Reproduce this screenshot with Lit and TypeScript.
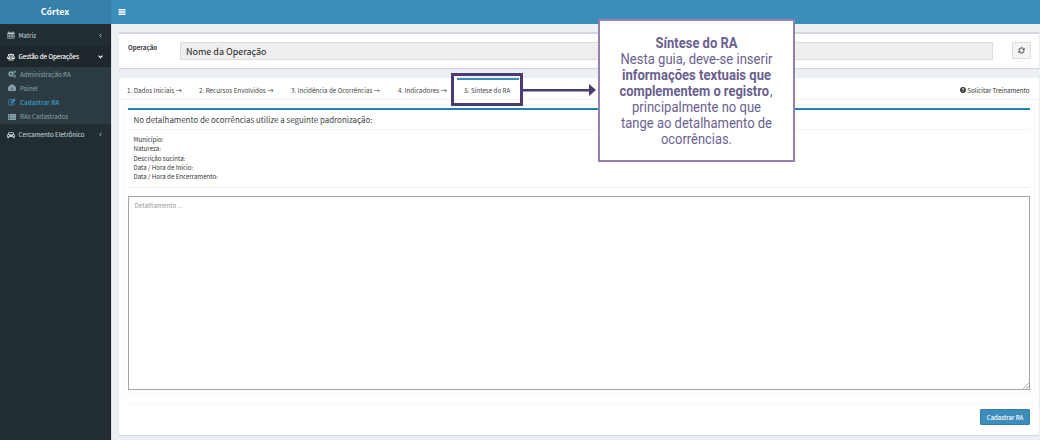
import { LitElement, html, svg, css } from 'lit';
import { customElement } from 'lit/decorators.js';

const glyph = (name: string) => {
  const shapes: Record<string, unknown> = {
    calendar: svg`<path fill-rule="evenodd" d="M1 3h2V1h2v2h6V1h2v2h2v12H1zM2.3 6.3v2h2.4v-2zm3.4 0v2h2v-2zm3 0v2h2v-2zm3 0v2h2v-2zM2.3 9.2v2h2.4v-2zm3.4 0v2h2v-2zm3 0v2h2v-2zm3 0v2h2v-2zM2.3 12v2h2.4v-2zm3.4 0v2h2v-2zm3 0v2h2v-2zm3 0v2h2v-2z"/>`,
    scale: svg`<path fill="none" stroke="currentColor" stroke-width="1.5" d="M8 1v13M3 14h10M2 3h12M3.5 3.5L.8 10h5.4zM12.500 3.500L9.800 10h5.400z"/><path d="M.3 10h6.200q-.5 2.500-3.100 2.500T.3 10zM9.500 10h6.200q-.5 2.500-3.100 2.500T9.500 10z"/>`,
    cogs: svg`<circle cx="6" cy="8" r="3.400" fill="none" stroke="currentColor" stroke-width="2.800"/><circle cx="6" cy="8" r="5.300" fill="none" stroke="currentColor" stroke-width="1.600" stroke-dasharray="2.080 2.080"/><circle cx="13.200" cy="3.600" r="1.800" fill="none" stroke="currentColor" stroke-width="1.900"/><circle cx="13.200" cy="12.400" r="1.800" fill="none" stroke="currentColor" stroke-width="1.900"/>`,
    gauge: svg`<path fill-rule="evenodd" d="M1.400 14A8 8 0 1 1 14.600 14zM2.200 8.900v1.200h1.200V8.900zM4.200 4.900v1.200h1.200V4.900zM12.600 8.900v1.200h1.200V8.900zM9.500 5.500L8 9.600a1.500 1.500 0 1 0 1 .4L10.600 6z"/>`,
    edit: svg`<path fill="none" stroke="currentColor" stroke-width="1.700" d="M10 3H3Q1.500 3 1.500 4.500v8Q1.500 14 3 14h8q1.500 0 1.500-1.500V9.500"/><path d="M5.500 11V8L12.500 1l3 3-7 7z"/>`,
    list: svg`<path d="M0 2h3v2.600H0zM3.800 2H16v2.600H3.800zM0 5.200h3v2.600H0zM3.800 5.200H16v2.600H3.800zM0 8.400h3V11H0zM3.800 8.400H16V11H3.800zM0 11.600h3v2.600H0zM3.800 11.600H16v2.600H3.800z"/>`,
    car: svg`<path fill-rule="evenodd" d="M3 2.500h10l1.700 4.300Q16 7.300 16 8.500V12h-1v2.500h-3V12H4v2.500H1V12H0V8.500Q0 7.300 1.300 6.800zM4.300 4.200L3.400 6.700h9.200l-.9-2.500zM2.800 8.200a1.200 1.200 0 1 0 .1 0zM13 8.200a1.200 1.200 0 1 0 .1 0z"/>`,
    left: svg`<path fill="none" stroke="currentColor" stroke-width="2" d="M10 4L6 8l4 4"/>`,
    down: svg`<path fill="none" stroke="currentColor" stroke-width="2.600" d="M3.500 6L8 10.500 12.500 6"/>`,
    bars: svg`<path d="M1 2h14v3H1zM1 6.600h14v3H1zM1 11.200h14v3H1z"/>`,
    refresh: svg`<path fill="none" stroke="currentColor" stroke-width="2.200" d="M2 7a6 6 0 0 1 11-2.200M14 9a6 6 0 0 1-11 2.200"/><path d="M15 1.500v6H9.500zM1 14.500v-6h5.500z"/>`,
    help: svg`<circle cx="8" cy="8" r="7.800"/><path fill="none" stroke="#fff" stroke-width="2.200" d="M5.400 6.300Q5.600 4 8 4t2.500 2q0 1.300-1.400 2T8 9.800M8 11v2"/>`,
  };
  return html`<svg class="icon ${name}" viewBox="0 0 16 16" fill="currentColor">${shapes[name]}</svg>`;
};

@customElement('side-menu')
class SideMenu extends LitElement {
  static styles = css`
    :host { display: block; background: #222d32; color: #b8c7ce; box-shadow: inset -1px 0 #1c262b; }
    .brand { height: 24px; line-height: 24px; background: #367fa9; color: #fff; font-size: 8.8px; font-weight: 700; text-align: center; padding-right: 1px; }
    .row { display: flex; align-items: center; height: 21px; padding: 0 7px; font-size: 6.2px; line-height: 9px; white-space: nowrap; }
    .row.first { height: 22px; }
    .row span { flex: 1; padding-left: 3.500px; -webkit-text-stroke: .1px currentColor; }
    .row.open { background: #1e282c; color: #fff; }
    .row .icon { width: 8px; height: 8px; }
    .row .left, .row .down { width: 7px; height: 7px; }
    .sub { background: #2c3b41; color: #8aa4af; height: 57px; }
    .leaf { display: flex; align-items: center; height: 14.2px; padding-left: 8px; font-size: 6.2px; line-height: 9px; white-space: nowrap; }
    .leaf span { padding-left: 4px; }
    .leaf .icon { width: 8px; height: 8px; }
    .leaf.on { color: #3c8dbc; font-weight: 700; }
  `;
  render() {
    return html`
      <div class="brand">Córtex</div>
      <div class="row first">${glyph('calendar')}<span>Matriz</span>${glyph('left')}</div>
      <div class="row open">${glyph('scale')}<span>Gestão de Operações</span>${glyph('down')}</div>
      <div class="sub">
        <div class="leaf">${glyph('cogs')}<span>Administração RA</span></div>
        <div class="leaf">${glyph('gauge')}<span>Painel</span></div>
        <div class="leaf on">${glyph('edit')}<span>Cadastrar RA</span></div>
        <div class="leaf">${glyph('list')}<span>RAs Cadastrados</span></div>
      </div>
      <div class="row">${glyph('car')}<span>Cercamento Eletrônico</span>${glyph('left')}</div>`;
  }
}

@customElement('help-callout')
class HelpCallout extends LitElement {
  static styles = css`
    :host { display: block; box-sizing: border-box; width: 197px; height: 143px; border: 2px solid #9382b0; background: #fff; color: #6a5f8f; font-family: Roboto, sans-serif; }
    svg { display: block; width: 193px; height: 139px; fill: currentColor; font-size: 15.3px; }
    .strong { font-weight: 700; }
  `;
  render() {
    const line = (y: number, width: number, text: string, strong = false) => svg`
      <text class=${strong ? 'strong' : ''} x="0" y=${y} transform="translate(96.500 0) scale(.84 1)" textLength=${width / 0.84} lengthAdjust="spacingAndGlyphs">${text}</text>`;
    return html`<svg viewBox="0 0 193 139" text-anchor="middle">
      ${line(27, 82, 'Síntese do RA', true)}
      ${line(43, 152, 'Nesta guia, deve-se inserir')}
      ${line(59, 149, 'informações textuais que', true)}
      <text class="strong" y="75" text-anchor="start" transform="translate(19.500 0) scale(.84 1)" textLength="178" lengthAdjust="spacingAndGlyphs">complementem o registro</text>
      <text y="75" text-anchor="start" transform="translate(170 0) scale(.84 1)">,</text>
      ${line(91, 129, 'principalmente no que')}
      ${line(107, 151, 'tange ao detalhamento de')}
      ${line(123, 71, 'ocorrências.')}
    </svg>`;
  }
}

@customElement('app-root')
class AppRoot extends LitElement {
  static styles = css`
    :host { display: grid; grid-template-columns: 111px 1fr; position: relative; width: 1040px; height: 440px; overflow: hidden; background: #ecf0f5; color: #444; font-family: "Noto Sans CJK SC", sans-serif; font-size: 6.3px; line-height: 9px; }
    * { box-sizing: border-box; }
    .main { display: flex; flex-direction: column; min-width: 0; border-left: 1px solid #d9dfe4; }
    .top { height: 24px; margin-left: -1px; background: #3c8dbc; color: #fff; display: flex; align-items: center; padding-left: 7px; }
    .top .icon { width: 8px; height: 8px; }
    .op { margin: 8px 1px 0 7px; height: 36px; border-top: 2px solid #d2d6de; background: #fff; display: flex; padding: 8px 8px 0 9px; box-shadow: 0 1px 1px rgba(0,0,0,.1); }
    .op label { width: 52px; font-size: 6.2px; font-weight: 700; padding-top: 1px; color: #333; }
    .field { width: 813px; height: 18px; border: 1px solid #dcdcdc; background: #eee; color: #222; font-size: 9px; line-height: 18px; padding-left: 5px; }
    .reload { margin-left: auto; width: 19px; height: 17px; border: 1px solid #ddd; border-radius: 1px; background: #f4f4f4; color: #333; display: flex; align-items: center; justify-content: center; }
    .reload .icon { width: 7px; height: 7px; }
    .card { margin: 10px 1px 0 7px; height: 357px; background: #fff; box-shadow: 0 1px 1px rgba(0,0,0,.1); display: flex; flex-direction: column; }
    .tabs { display: flex; height: 22px; padding: 0 9.500px 0 8px; border-bottom: 1px solid #f4f4f4; line-height: 25px; white-space: nowrap; }
    .tabs .t1 { width: 72px; } .tabs .t2 { width: 92px; } .tabs .t3 { width: 107px; font-size: 6.22px; } .tabs .t4 { width: 58.500px; }
    .tabs .t5 { width: 62px; border-top: 2px solid #3c8dbc; padding-left: 8px; font-size: 6.2px; line-height: 21px; }
    .train { margin-left: auto; display: flex; align-items: center; gap: 1.500px; padding-top: 3px; color: #333; font-size: 6.2px; }
    .train .icon { width: 6px; height: 6px; }
    .pane { margin: 4px 4px 0 5px; height: 290px; border: 1px solid #f7f7f7; padding: 3px 4px 0 3px; }
    .hint { border-top: 2px solid #1f7fb9; border-bottom: 1px solid #eee; height: 80px; }
    .hint h3 { margin: 0; height: 20px; padding-left: 5.500px; border-bottom: 1px solid #f4f4f4; font-size: 7.95px; font-weight: 400; line-height: 19px; }
    .hint div { padding: 5px 0 0 5.500px; font-size: 6.15px; line-height: 9.350px; color: #333; }
    .area { margin-top: 8px; height: 194px; border: 1px solid #a4a4a4; color: #999; padding: 4px 5.500px; position: relative; }
    .grip { position: absolute; right: 0; bottom: 0; width: 6px; height: 6px; }
    .foot { margin: 9px 4px 0 5px; border-top: 1px solid #f7f7f7; padding: 5px 5px; display: flex; justify-content: flex-end; }
    .save { width: 50px; height: 16px; border: 1px solid #367fa9; border-radius: 1px; background: #3c8dbc; color: #fff; text-align: center; font-size: 6.1px; line-height: 15px; -webkit-text-stroke: .1px currentColor; }
    .frame { position: absolute; left: 451px; top: 73px; width: 72px; height: 33px; border: 3px solid #4a3c70; }
    .arrow { position: absolute; left: 523px; top: 84px; width: 73px; height: 12px; }
    help-callout { position: absolute; left: 598px; top: 19px; }
  `;
  render() {
    return html`
      <side-menu></side-menu>
      <div class="main">
        <div class="top">${glyph('bars')}</div>
        <div class="op"><label>Operação</label><div class="field">Nome da Operação</div><div class="reload">${glyph('refresh')}</div></div>
        <div class="card">
          <div class="tabs">
            <div class="t1"><span>1. Dados Iniciais →</span></div><div class="t2"><span>2. Recursos Envolvidos →</span></div><div class="t3"><span>3. Incidência de Ocorrências →</span></div><div class="t4"><span>4. Indicadores →</span></div><div class="t5"><span>5. Síntese do RA</span></div>
            <div class="train">${glyph('help')}<span>Solicitar Treinamento</span></div>
          </div>
          <div class="pane">
            <div class="hint">
              <h3>No detalhamento de ocorrências utilize a seguinte padronização:</h3>
              <div>Município:<br>Natureza:<br>Descrição sucinta:<br>Data / Hora de Início:<br>Data / Hora de Encerramento:</div>
            </div>
            <div class="area">Detalhamento ...<svg class="grip" viewBox="0 0 6 6" stroke="#888" stroke-width=".7"><path d="M0 6L6 0M3 6L6 3"/></svg></div>
          </div>
          <div class="foot"><div class="save">Cadastrar RA</div></div>
        </div>
      </div>
      <div class="frame"></div>
      <svg class="arrow" viewBox="0 0 73 12" fill="#4a3c70"><path d="M0 5h66V0l7 6-7 6V7.500H0z"/></svg>
      <help-callout></help-callout>`;
  }
}
